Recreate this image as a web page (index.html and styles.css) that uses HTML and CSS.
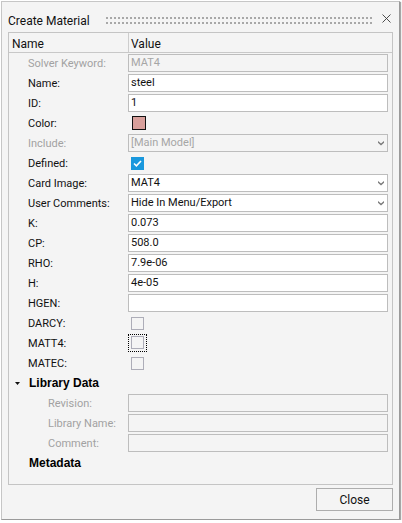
FILE: index.html
```html
<!DOCTYPE html>
<html>
<head>
<meta charset="utf-8">
<title>Create Material</title>
<link rel="stylesheet" href="styles.css">
</head>
<body>
<div class="window">
  <div class="titlebar">
    <span class="title">Create Material</span>
    <div class="grip"></div>
    <svg class="close-x" width="9" height="9" viewBox="0 0 9 9"><path d="M0.5 0.5 L8.5 8.5 M8.5 0.5 L0.5 8.5" stroke="#3a3a3a" stroke-width="0.9" fill="none"/></svg>
  </div>
  <div class="panel">
    <div class="head">
      <div class="hcell hname">Name</div>
      <div class="hcell hvalue">Value</div>
    </div>
    <div class="row"><div class="label dis">Solver Keyword:</div><div class="field dis">MAT4</div></div>
    <div class="row"><div class="label">Name:</div><div class="field">steel</div></div>
    <div class="row"><div class="label">ID:</div><div class="field">1</div></div>
    <div class="row"><div class="label">Color:</div><div class="cellbox"><span class="swatch"></span></div></div>
    <div class="row"><div class="label dis">Include:</div><div class="field dis select">[Main Model]<svg class="arrow" width="6" height="5" viewBox="0 0 6 5"><path d="M0 0 L3 2.5 L6 0 L6 1.8 L3 4.5 L0 1.8 Z" fill="#7a7a7a"/></svg></div></div>
    <div class="row"><div class="label">Defined:</div><div class="cellbox"><span class="check on"><svg width="9" height="7" viewBox="0 0 9 7"><path d="M1 3.5 L3.4 5.8 L8 1" stroke="#fff" stroke-width="1.6" fill="none"/></svg></span></div></div>
    <div class="row"><div class="label">Card Image:</div><div class="field select">MAT4<svg class="arrow" width="6" height="5" viewBox="0 0 6 5"><path d="M0 0 L3 2.5 L6 0 L6 1.8 L3 4.5 L0 1.8 Z" fill="#7a7a7a"/></svg></div></div>
    <div class="row"><div class="label">User Comments:</div><div class="field select">Hide In Menu/Export<svg class="arrow" width="6" height="5" viewBox="0 0 6 5"><path d="M0 0 L3 2.5 L6 0 L6 1.8 L3 4.5 L0 1.8 Z" fill="#7a7a7a"/></svg></div></div>
    <div class="row"><div class="label">K:</div><div class="field">0.073</div></div>
    <div class="row"><div class="label">CP:</div><div class="field">508.0</div></div>
    <div class="row"><div class="label">RHO:</div><div class="field">7.9e-06</div></div>
    <div class="row"><div class="label">H:</div><div class="field">4e-05</div></div>
    <div class="row"><div class="label">HGEN:</div><div class="field"></div></div>
    <div class="row"><div class="label">DARCY:</div><div class="cellbox"><span class="check"></span></div></div>
    <div class="row"><div class="label">MATT4:</div><div class="cellbox"><span class="focus"><span class="check"></span></span></div></div>
    <div class="row"><div class="label">MATEC:</div><div class="cellbox"><span class="check"></span></div></div>
    <div class="row section"><svg class="tri" width="5" height="3" viewBox="0 0 5 3"><path d="M0 0 L5 0 L2.5 3 Z" fill="#111"/></svg><span>Library Data</span></div>
    <div class="row"><div class="label sub dis">Revision:</div><div class="field dis"></div></div>
    <div class="row"><div class="label sub dis">Library Name:</div><div class="field dis"></div></div>
    <div class="row"><div class="label sub dis">Comment:</div><div class="field dis"></div></div>
    <div class="row section meta"><span>Metadata</span></div>
  </div>
  <div class="footer">
    <button class="btn">Close</button>
  </div>
</div>
</body>
</html>
```

FILE: styles.css
```css
* { box-sizing: border-box; }

body {
  margin: 0;
  background: #ffffff;
  font-family: Roboto, "Liberation Sans", sans-serif;
  color: #111;
}

.window {
  margin: 1px 0 0 1px;
  width: 399px;
  height: 519px;
  border: 1px solid #c6c6c6;
  border-right-color: #9a9a9a;
  border-bottom-color: #9a9a9a;
  background: #f4f4f4;
  box-shadow: 1px 1px 1px rgba(0, 0, 0, 0.35);
  padding: 0 6px 0 6px;
}

.titlebar {
  display: flex;
  align-items: flex-start;
  height: 30px;
  padding-right: 2px;
}

.title {
  font-size: 12px;
  line-height: 16px;
  margin-top: 11px;
  color: #111;
  white-space: nowrap;
}

.grip {
  flex: 1;
  height: 7px;
  margin-top: 15px;
  margin-left: 16px;
  background-image:
    linear-gradient(90deg, #a8a8a8 2px, transparent 2px),
    linear-gradient(90deg, #a8a8a8 2px, transparent 2px);
  background-size: 4px 2px, 4px 2px;
  background-position: 0 0, 0 5px;
  background-repeat: repeat-x, repeat-x;
}

.close-x {
  display: block;
  margin-top: 12px;
  margin-left: 9px;
  flex: none;
}

.panel {
  border: 1px solid #c4c4c4;
  padding-bottom: 11px;
}

.head {
  display: grid;
  grid-template-columns: 120px 1fr;
  height: 20px;
  border-bottom: 1px solid #c8c8c8;
}

.hcell {
  font-size: 12px;
  display: flex;
  align-items: center;
  padding-top: 2px;
  color: #111;
}

.hname {
  padding-left: 3px;
  border-right: 1px solid #cdcdcd;
}

.hvalue {
  padding-left: 2px;
}

.row {
  display: grid;
  grid-template-columns: 119px 260px;
  height: 20px;
  align-items: center;
}

.label {
  font-size: 11px;
  padding-left: 19px;
  color: #111;
  white-space: nowrap;
}

.label.sub {
  padding-left: 39px;
}

.dis {
  color: #a2a2a2;
}

.field {
  height: 18px;
  border: 1px solid #bdbdbd;
  background: #ffffff;
  font-size: 11px;
  line-height: 16px;
  padding: 0 2px;
  color: #111;
  white-space: nowrap;
}

.field.dis {
  background: #f4f4f4;
  color: #a6a6a6;
}

.field.select {
  display: flex;
  align-items: center;
  justify-content: space-between;
  padding-right: 3px;
}

.arrow {
  display: block;
  flex: none;
}

.cellbox {
  display: flex;
  align-items: center;
  height: 20px;
}

.swatch {
  display: block;
  width: 14px;
  height: 14px;
  margin-left: 4px;
  border: 1px solid #111;
  background: #d89f9b;
}

.check {
  display: flex;
  align-items: center;
  justify-content: center;
  width: 13px;
  height: 13px;
  margin-left: 3px;
  border: 1px solid #adadb8;
  background: #f4f4f4;
}

.check.on {
  background: #1a98dd;
  border-color: #1a98dd;
}

.check svg {
  display: block;
}

.focus {
  display: block;
  border: 1px dotted #000;
  padding: 1px 2px 2px 2px;
}

.focus .check {
  margin-left: 0;
}

.section {
  display: flex;
  align-items: center;
  padding-left: 6px;
  font-family: "Liberation Sans", Arial, sans-serif;
  font-weight: bold;
  font-size: 12px;
  color: #000;
}

.tri {
  display: block;
  margin-right: 9px;
}

.section.meta {
  padding-left: 20px;
}

.footer {
  display: flex;
  justify-content: flex-end;
  margin-top: 3px;
}

.btn {
  width: 77px;
  height: 23px;
  border: 1px solid #adadad;
  background: #f4f4f4;
  font-family: Roboto, "Liberation Sans", sans-serif;
  font-size: 12px;
  color: #111;
  padding: 0;
}
```
